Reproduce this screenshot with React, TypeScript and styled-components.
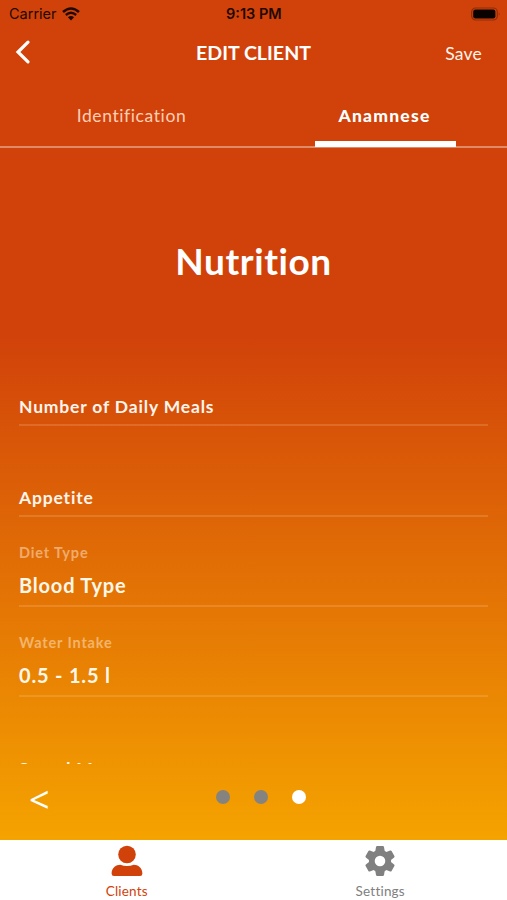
import React, { FunctionComponent } from 'react';
import styled, { createGlobalStyle } from 'styled-components';

type FieldProps = {
  label: string;
  value?: string;
};

const Field: FunctionComponent<FieldProps> = ({ label, value }) => (
  <FieldRoot>
    {value ? (
      <>
        <FieldLabel>{label}</FieldLabel>
        <FieldValue>{value}</FieldValue>
      </>
    ) : (
      <Placeholder>{label}</Placeholder>
    )}
  </FieldRoot>
);

const App: FunctionComponent = () => (
  <Screen>
    <GlobalStyle />
    <StatusBar>
      <Carrier>
        <StatusText $width={47}>Carrier</StatusText>
        <WifiIcon />
      </Carrier>
      <StatusText $bold $width={58}>9:13 PM</StatusText>
      <Battery>
        <BatteryIcon />
      </Battery>
    </StatusBar>
    <Header>
      <BackButton aria-label="Back">
        <svg width="16" height="26" viewBox="0 0 16 26" fill="none">
          <path d="M13 3.2L3 13L13 22.8" stroke="#fff" strokeWidth="3.2" strokeLinecap="round" />
        </svg>
      </BackButton>
      <Title>EDIT CLIENT</Title>
      <SaveButton>Save</SaveButton>
    </Header>
    <Tabs>
      <Tab>Identification</Tab>
      <Tab $active>Anamnese</Tab>
    </Tabs>
    <Content>
      <Heading>Nutrition</Heading>
      <Field label="Number of Daily Meals" />
      <Field label="Appetite" />
      <Field label="Diet Type" value="Blood Type" />
      <Field label="Water Intake" value="0.5 - 1.5 l" />
      <Field label="Speed Menu" />
    </Content>
    <Pager>
      <Previous aria-label="Previous">&lt;</Previous>
      <Dots>
        <Dot />
        <Dot />
        <Dot $active />
      </Dots>
    </Pager>
    <BottomBar>
      <BottomItem $active>
        <PersonIcon />
        <BottomLabel>Clients</BottomLabel>
      </BottomItem>
      <BottomItem>
        <GearIcon />
        <BottomLabel>Settings</BottomLabel>
      </BottomItem>
    </BottomBar>
  </Screen>
);

export default App;

const WifiIcon = () => (
  <svg width="18" height="14" viewBox="0 0 18 14" fill="none">
    <path d="M1 5Q9-2 17 5" stroke="#210900" strokeWidth="2.5" />
    <path d="M3.8 8Q9 3.6 14.2 8" stroke="#210900" strokeWidth="2.3" />
    <path d="M5.9 10.2Q9 7.7 12.1 10.2L9 13.5Z" fill="#210900" />
  </svg>
);

const BatteryIcon = () => (
  <svg width="31" height="14" viewBox="0 0 31 14">
    <rect x="1.7" y="1" width="25.6" height="12" rx="4" fill="none" stroke="#8e2c08" strokeWidth="1.2" />
    <rect x="3.2" y="2.6" width="22.2" height="8.8" rx="2.2" fill="#0a0200" />
    <path d="M28.8 5.2Q30.6 7 28.8 8.8Z" fill="#8e2c08" />
  </svg>
);

const PersonIcon = () => (
  <svg width="32" height="32" viewBox="0 0 32 32" fill="currentColor">
    <circle cx="16" cy="9.5" r="8.8" />
    <path d="M.6 28.5C.6 22.5 5 19.7 9.2 19.7Q16 22.2 22.8 19.7C27 19.7 31.4 22.5 31.4 28.5Q31.4 31 29 31H3Q.6 31 .6 28.5Z" />
  </svg>
);

const TOOTH_ANGLES = [0, 60, 120];

const GearIcon = () => (
  <svg width="32" height="32" viewBox="-16 -16 32 32" fill="currentColor">
    {TOOTH_ANGLES.map((angle) => (
      <path
        key={angle}
        d="M-2.8-15H2.8Q3.8-15 4-14L5-8H-5L-4-14Q-3.8-15-2.8-15ZM-2.8 15H2.8Q3.8 15 4 14L5 8H-5L-4 14Q-3.8 15-2.8 15Z"
        transform={`rotate(${angle})`}
      />
    ))}
    <circle r="8.2" fill="none" stroke="currentColor" strokeWidth="5.8" />
  </svg>
);

const GlobalStyle = createGlobalStyle`
  * {
    box-sizing: border-box;
  }
  body {
    margin: 0;
  }
  button {
    padding: 0;
    border: 0;
    background: none;
    color: inherit;
    font: inherit;
  }
`;

const Screen = styled.div`
  display: flex;
  flex-direction: column;
  height: 900px;
  overflow: hidden;
  color: #fff5ed;
  font-family: Lato, sans-serif;
  background: linear-gradient(#d1420a 0, #d1420a 336px, #f5a300 840px);
`;

const StatusBar = styled.div`
  display: grid;
  grid-template-columns: 1fr auto 1fr;
  align-items: center;
  height: 27px;
  padding: 0 6px 0 9px;
`;

const Carrier = styled.div`
  display: flex;
  align-items: center;
  gap: 6px;
`;

const StatusText = styled.span<{ $bold?: boolean; $width: number }>`
  width: ${({ $width }) => $width}px;
  color: #210900;
  font: ${({ $bold }) => ($bold ? 600 : 400)} 14.5px/27px Inter, sans-serif;
  white-space: nowrap;
`;

const Battery = styled.div`
  display: flex;
  justify-content: flex-end;
`;

const Header = styled.header`
  display: grid;
  grid-template-columns: 1fr auto 1fr;
  align-items: center;
  height: 53px;
  padding: 0 16px 3px;
`;

const BackButton = styled.button`
  display: flex;
  margin-left: -1px;
`;

const Title = styled.h1`
  margin: 0;
  color: #fff;
  font-size: 19.6px;
  font-weight: 700;
`;

const SaveButton = styled.button`
  justify-self: end;
  padding: 2px 9px 0 0;
  font-size: 17.5px;
  letter-spacing: 0.2px;
`;

const Tabs = styled.nav`
  display: flex;
  flex: none;
  height: 68px;
  border-bottom: 2px solid #df8b68;
`;

const Tab = styled.div<{ $active?: boolean }>`
  position: relative;
  flex: 1;
  padding: 24px 0 0 ${({ $active }) => ($active ? 8 : 9)}px;
  color: ${({ $active }) => ($active ? '#fff' : '#ffcfb5')};
  font-size: 17.5px;
  font-weight: ${({ $active }) => ($active ? 900 : 400)};
  line-height: 24px;
  letter-spacing: ${({ $active }) => ($active ? 1.2 : 0.6)}px;
  text-align: center;

  &::after {
    display: ${({ $active }) => ($active ? 'block' : 'none')};
    position: absolute;
    bottom: -1px;
    left: 60.5px;
    width: 141.5px;
    height: 6px;
    background: #fff;
    content: '';
  }
`;

const Content = styled.main`
  flex: none;
  height: 616px;
  padding: 0 19px;
  overflow: hidden;
`;

const Heading = styled.h2`
  margin: 0;
  padding-top: 89px;
  height: 188px;
  color: #fff;
  font-size: 37px;
  font-weight: 700;
  line-height: 48px;
  letter-spacing: 0.6px;
  text-align: center;
`;

const FieldRoot = styled.div`
  display: flex;
  flex-direction: column;
  justify-content: flex-end;
  height: 90.3px;
  border-bottom: 2px solid rgba(255, 220, 180, 0.18);

  &:last-child {
    height: 91px;
  }
`;

const FieldLabel = styled.div`
  color: rgba(255, 235, 210, 0.5);
  font-size: 14.5px;
  font-weight: 700;
  line-height: 20px;
  letter-spacing: 0.85px;
`;

const FieldValue = styled.div`
  margin-top: 9px;
  padding-bottom: 7px;
  color: #fff8e8;
  font-size: 20px;
  font-weight: 700;
  line-height: 26px;
  letter-spacing: 0.8px;
`;

const Placeholder = styled.div`
  padding-bottom: 6px;
  font-size: 17.5px;
  font-weight: 700;
  line-height: 22px;
  letter-spacing: 0.83px;
`;

const Pager = styled.div`
  display: grid;
  grid-template-columns: 1fr auto 1fr;
  align-items: start;
  flex: none;
  height: 76px;
  padding: 0 14px 0 29px;
`;

const Previous = styled.button`
  justify-self: start;
  padding-top: 17px;
  color: #fff;
  font-family: 'Open Sans', sans-serif;
  font-size: 36px;
  line-height: 38px;
`;

const Dots = styled.div`
  display: flex;
  gap: 24.3px;
  padding-top: 26px;
`;

const Dot = styled.span<{ $active?: boolean }>`
  width: 14px;
  height: 14px;
  border-radius: 50%;
  background: ${({ $active }) => ($active ? '#fff' : '#85837f')};
`;

const BottomBar = styled.nav`
  display: flex;
  height: 60px;
  background: #fff;
`;

const BottomItem = styled.div<{ $active?: boolean }>`
  display: flex;
  flex: 1;
  flex-direction: column;
  align-items: center;
  padding-top: 5px;
  color: ${({ $active }) => ($active ? '#d1420a' : '#808080')};
`;

const BottomLabel = styled.span`
  margin-top: 5px;
  font-size: 13.5px;
  line-height: 18px;
  letter-spacing: 0.2px;
`;
